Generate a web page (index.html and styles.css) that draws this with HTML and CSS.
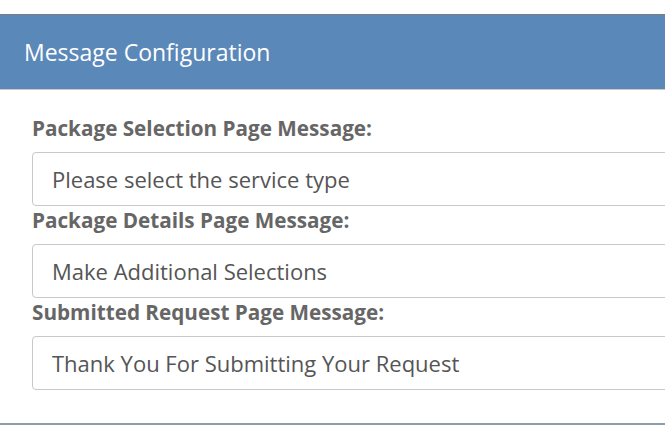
FILE: index.html
```html
<!DOCTYPE html>
<html lang="en">
<head>
<meta charset="utf-8">
<title>Message Configuration</title>
<link rel="stylesheet" href="styles.css">
</head>
<body>
<section class="card">
  <header class="card-header">
    <h2 class="card-title">Message Configuration</h2>
  </header>
  <div class="card-body">
    <label class="field-label" for="m1">Package Selection Page Message:</label>
    <input class="field-input" id="m1" type="text" value="Please select the service type">
    <label class="field-label" for="m2">Package Details Page Message:</label>
    <input class="field-input" id="m2" type="text" value="Make Additional Selections">
    <label class="field-label" for="m3">Submitted Request Page Message:</label>
    <input class="field-input" id="m3" type="text" value="Thank You For Submitting Your Request">
  </div>
</section>
</body>
</html>
```

FILE: styles.css
```css
html, body {
  margin: 0;
  padding: 0;
  overflow: hidden;
  background: #ffffff;
  font-family: "Open Sans", "Liberation Sans", sans-serif;
}

body {
  padding-top: 14px;
}

.card {
  width: 760px;
  border-top: 1px solid #7c7c7c;
  border-bottom: 2px solid #8e9caa;
  background: #ffffff;
}

.card-header {
  height: 74px;
  background: #5a88b9;
  border-bottom: 1px solid #c8c8c8;
  display: flex;
  align-items: center;
  padding-left: 24px;
}

.card-title {
  margin: 0;
  font-size: 23px;
  font-weight: 400;
  color: #ffffff;
}

.card-body {
  display: flex;
  flex-direction: column;
  align-items: flex-start;
  padding: 24px 0 33px 32px;
}

.field-label {
  display: block;
  margin: 1px 0 11px 0;
  font-size: 20.7px;
  line-height: 26px;
  font-weight: 700;
  color: #666666;
}

.field-input {
  box-sizing: border-box;
  width: 700px;
  height: 54px;
  margin: 0;
  padding: 0 19px;
  border: 1px solid #c8c8c8;
  border-radius: 4px;
  background: #ffffff;
  font-family: "Open Sans", "Liberation Sans", sans-serif;
  font-size: 22px;
  color: #555555;
  outline: none;
}
```
